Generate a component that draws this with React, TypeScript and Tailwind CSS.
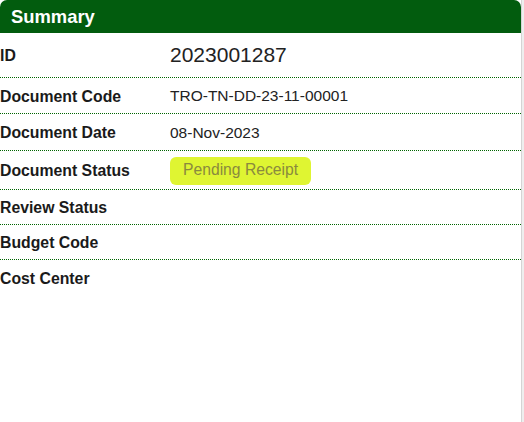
import React from "react";

const rows: { label: string; value?: React.ReactNode; h: string; big?: boolean; border?: boolean }[] = [
  { label: "ID", value: "2023001287", h: "h-[45px]", big: true, border: true },
  { label: "Document Code", value: "TRO-TN-DD-23-11-00001", h: "h-[36px]", border: true },
  { label: "Document Date", value: "08-Nov-2023", h: "h-[37px]", border: true },
  {
    label: "Document Status",
    value: (
      <span className="inline-block rounded-[6px] bg-[#dff532] pl-[13px] pr-[13px] pt-[3px] pb-[5px] text-[15.7px] leading-[20px] text-[#8a8a3e]">
        Pending Receipt
      </span>
    ),
    h: "h-[39px]",
    border: true,
  },
  { label: "Review Status", h: "h-[35px]", border: true },
  { label: "Budget Code", h: "h-[35px]", border: true },
  { label: "Cost Center", h: "h-[36px]" },
];

export default function App() {
  return (
    <div className="flex h-[422px] w-[524px] bg-white font-['Liberation_Sans',Arial,sans-serif]">
      <div className="w-[521px]">
        <div className="flex h-[33px] items-center rounded-t-[7px] bg-[#025c0e] pl-[11px] text-[18.4px] font-bold text-white">
          Summary
        </div>
        {rows.map((r) => (
          <div
            key={r.label}
            className={`flex items-center ${r.h} ${r.border ? "border-b border-dotted border-[#006400]" : ""}`}
          >
            <div className="w-[170px] pt-[2px] text-[15.8px] font-bold text-[#1a1a1a]">{r.label}</div>
            <div className={r.big ? "text-[21px] text-[#222]" : "pt-[1px] text-[15.5px] text-[#222]"}>{r.value}</div>
          </div>
        ))}
      </div>
      <div className="h-full w-[3px] border-l border-[#d4d4d4] bg-[#eeeeee]" />
    </div>
  );
}
